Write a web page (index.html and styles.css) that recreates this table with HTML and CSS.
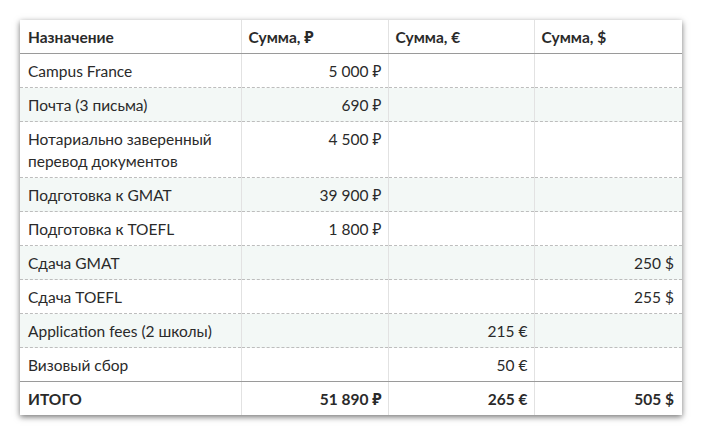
FILE: index.html
```html
<!DOCTYPE html>
<html lang="ru">
<head>
<meta charset="utf-8">
<link rel="stylesheet" href="styles.css">
</head>
<body>
<table class="budget">
  <colgroup>
    <col class="c1"><col class="c2"><col class="c3"><col class="c4">
  </colgroup>
  <thead>
    <tr><th>Назначение</th><th>Сумма, ₽</th><th>Сумма, €</th><th>Сумма, $</th></tr>
  </thead>
  <tbody>
    <tr><td>Campus France</td><td class="num">5 000 ₽</td><td></td><td></td></tr>
    <tr class="alt"><td>Почта (3 письма)</td><td class="num">690 ₽</td><td></td><td></td></tr>
    <tr><td>Нотариально заверенный<br>перевод документов</td><td class="num">4 500 ₽</td><td></td><td></td></tr>
    <tr class="alt"><td>Подготовка к GMAT</td><td class="num">39 900 ₽</td><td></td><td></td></tr>
    <tr><td>Подготовка к TOEFL</td><td class="num">1 800 ₽</td><td></td><td></td></tr>
    <tr class="alt"><td>Сдача GMAT</td><td></td><td></td><td class="num">250 $</td></tr>
    <tr><td>Сдача TOEFL</td><td></td><td></td><td class="num">255 $</td></tr>
    <tr class="alt"><td>Application fees (2 школы)</td><td></td><td class="num">215 €</td><td></td></tr>
    <tr class="last"><td>Визовый сбор</td><td></td><td class="num">50 €</td><td></td></tr>
  </tbody>
  <tfoot>
    <tr><td>ИТОГО</td><td class="num">51 890 ₽</td><td class="num">265 €</td><td class="num">505 $</td></tr>
  </tfoot>
</table>
</body>
</html>
```
FILE: styles.css
```css
html, body {
  margin: 0;
  padding: 0;
  background: #ffffff;
}
body {
  padding: 20px;
  font-family: Lato, "Noto Sans", sans-serif;
  font-size: 15.5px;
  color: #2a2a2a;
}
.budget {
  width: 662px;
  border-collapse: collapse;
  table-layout: fixed;
  background: #fff;
  box-shadow: 0 2px 6px rgba(0, 0, 0, 0.55);
}
.c1 { width: 221px; }
.c2 { width: 147px; }
.c3 { width: 146px; }
.c4 { width: 148px; }
.budget th,
.budget td {
  text-align: left;
  line-height: 22px;
  padding: 6px 6px 5px 7px;
  vertical-align: top;
  border-left: 1px solid #e2e2e2;
}
.budget th:first-child,
.budget td:first-child {
  border-left: none;
  padding-left: 8px;
}
.budget th {
  font-weight: 700;
  padding-top: 6px;
  padding-bottom: 5px;
  border-bottom: 1px solid #9a9a9a;
}
.budget tbody td {
  border-bottom: 1px dashed #bdbdbd;
}
.budget tbody tr.alt td {
  background: #f3f8f6;
}
.budget tbody tr.last td {
  border-bottom: 1px solid #9a9a9a;
}
.budget tfoot td {
  font-weight: 700;
  padding-top: 6px;
  padding-bottom: 5px;
}
.budget td.num {
  text-align: right;
  padding-right: 6px;
}
.budget td:last-child.num {
  padding-right: 8px;
}
```
